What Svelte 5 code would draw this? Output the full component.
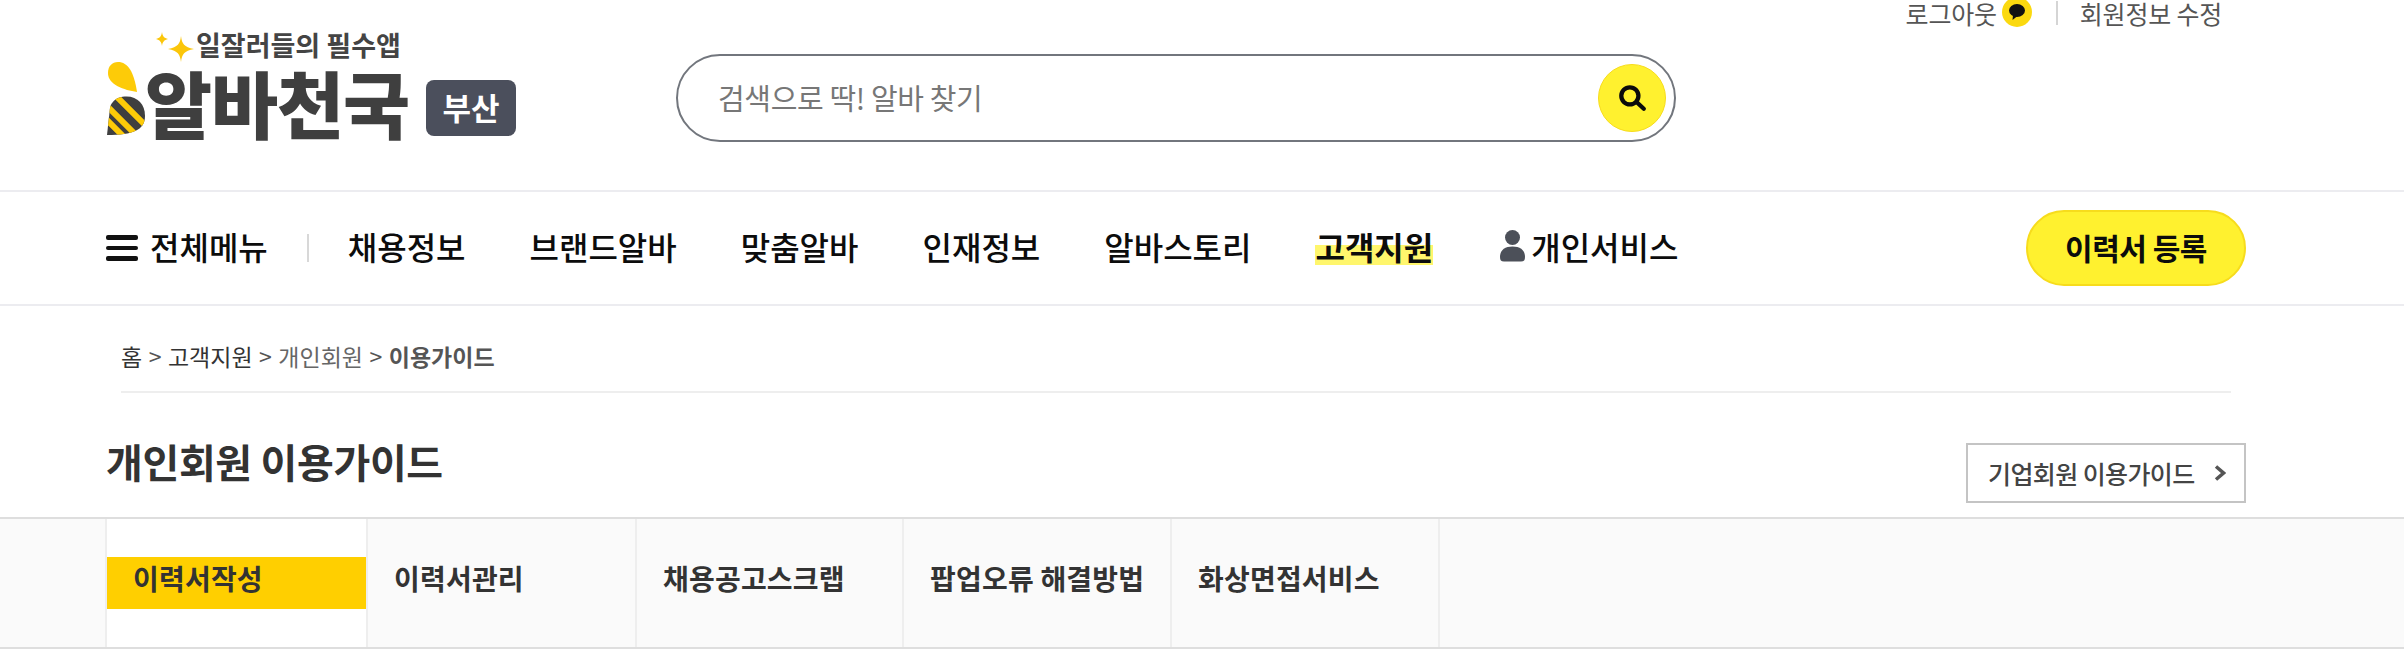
<script>
  const navItems = [
    { label: '채용정보' },
    { label: '브랜드알바' },
    { label: '맞춤알바' },
    { label: '인재정보' },
    { label: '알바스토리' },
    { label: '고객지원', active: true }
  ];
  const tabs = [
    { label: '이력서작성', width: 263, active: true },
    { label: '이력서관리', width: 269 },
    { label: '채용공고스크랩', width: 267 },
    { label: '팝업오류 해결방법', width: 268 },
    { label: '화상면접서비스', width: 268 }
  ];
</script>

<div class="page">
  <header class="header">
    <div class="util">
      <span class="login">로그아웃</span>
      <svg class="kakao" width="30" height="30" viewBox="0 0 30 30" aria-hidden="true">
        <circle cx="15" cy="15" r="15" fill="#fbd90f" />
        <ellipse cx="15" cy="13.5" rx="8" ry="6.5" fill="#111" />
        <path d="M11 18 L10.5 23 L15.5 19 Z" fill="#111" />
      </svg>
      <i class="util-sep"></i>
      <span class="login">회원정보 수정</span>
    </div>
    <div class="brand-row">
      <div class="logo">
        <div class="tagline">
          <svg width="40" height="40" viewBox="0 0 40 40" aria-hidden="true">
            <path d="M8 6 C8.6 10 10 12 14 13 C10 14 8.6 16 8 20 C7.400 16 6 14 2 13 C6 12 7.400 10 8 6 Z" fill="#fbc60a" />
            <path d="M27 10 C28 18 30 21 40 23 C30 25 28 28 27 36 C26 28 24 25 14 23 C24 21 26 18 27 10 Z" fill="#fbc60a" />
          </svg>
          <span>일잘러들의 필수앱</span>
        </div>
        <div class="wordmark">
          <svg class="bee" width="42" height="76" viewBox="0 0 42 76" aria-hidden="true">
            <path d="M12 0 C22 0 28 10 31 30 C18 28 2 23 2 11 C2 4 6 0 12 0 Z" fill="#fdcb08" />
            <clipPath id="bee-body"><path d="M12 36 C28 31 39 40 39 54 C39 68 27 73 1 73 L4 46 C5 41 8 38 12 36 Z" /></clipPath>
            <g clip-path="url(#bee-body)">
              <rect width="42" height="76" fill="#3f3f3f" />
              <path d="M-5 38 L30 73 M-5 52 L18 75 M4 28 L38 62" stroke="#fdcb08" stroke-width="6" fill="none" />
            </g>
          </svg>
          <span class="word">알바천국</span>
          <span class="badge">부산</span>
        </div>
      </div>
      <form class="search" onsubmit={(e) => e.preventDefault()}>
        <span class="placeholder">검색으로 딱! 알바 찾기</span>
        <button class="search-btn" type="submit" aria-label="검색">
          <svg width="30" height="30" viewBox="0 0 28 28" aria-hidden="true">
            <circle cx="12" cy="12" r="8" fill="none" stroke="#0b0b0b" stroke-width="4" />
            <path d="M18.500 18 L25 24" stroke="#0b0b0b" stroke-width="4" stroke-linecap="round" />
          </svg>
        </button>
      </form>
    </div>
  </header>

  <nav class="nav">
    <div class="nav-main">
      <div class="menu-all">
        <span class="burger"><i></i><i></i><i></i></span>
        <span>전체메뉴</span>
      </div>
      <i class="nav-sep"></i>
      <ul class="nav-list">
        {#each navItems as item}
          <li><a href="#top" class:current={item.active}>{item.label}</a></li>
        {/each}
        <li class="person">
          <svg width="25" height="32" viewBox="0 0 25 32" aria-hidden="true">
            <circle cx="12.500" cy="7.500" r="7.500" fill="#4c5059" />
            <path d="M0 27 C0 20 5 16.500 12.500 16.500 C20 16.500 25 20 25 27 C25 30 24 31.500 21 31.500 L4 31.500 C1 31.500 0 30 0 27 Z" fill="#4c5059" />
          </svg>
          <a href="#top">개인서비스</a>
        </li>
      </ul>
    </div>
    <button class="resume" type="button">이력서 등록</button>
  </nav>

  <div class="crumbs">
    <span class="c-home">홈</span><span class="gt">&gt;</span><span class="c-home">고객지원</span><span class="gt">&gt;</span><span class="c-mid">개인회원</span><span class="gt">&gt;</span><strong>이용가이드</strong>
  </div>

  <div class="title-row">
    <h1>개인회원 이용가이드</h1>
    <a class="biz" href="#top">
      <span>기업회원 이용가이드</span>
      <svg width="12" height="18" viewBox="0 0 12 18" aria-hidden="true">
        <path d="M2 2.500 L9.500 9 L2 15.500" fill="none" stroke="#555" stroke-width="3.500" />
      </svg>
    </a>
  </div>

  <div class="tabs">
    {#each tabs as tab}
      <div class="tab" class:on={tab.active} style="width:{tab.width}px">
        <span class="tab-label">{tab.label}</span>
      </div>
    {/each}
  </div>
</div>

<style>
  :global(body) {
    margin: 0;
    background: #fff;
  }
  .page {
    width: 2404px;
    height: 662px;
    overflow: hidden;
    font-family: "Noto Sans CJK KR", "Noto Sans", sans-serif;
    color: #111;
  }
  .header {
    height: 190px;
    display: flex;
    flex-direction: column;
  }
  .util {
    height: 26px;
    display: flex;
    align-items: center;
    justify-content: flex-end;
    padding-right: 182px;
    font-size: 25px;
    color: #555;
    letter-spacing: -0.2px;
  }
  .login {
    line-height: 26px;
  }
  .kakao {
    margin-left: 5px;
    margin-top: -2px;
  }
  .util-sep {
    width: 2px;
    height: 24px;
    background: #d5d5d5;
    margin: 0 22px 0 24px;
  }
  .brand-row {
    display: flex;
    padding-left: 106px;
  }
  .logo {
    width: 570px;
  }
  .tagline {
    display: flex;
    align-items: center;
    height: 40px;
    padding-left: 48px;
    font-size: 27px;
    line-height: 30px;
    font-weight: 700;
    color: #444;
  }
  .tagline span {
    margin-top: -2px;
  }
  .tagline svg {
    margin-right: 2px;
  }
  .wordmark {
    display: flex;
    align-items: center;
    height: 76px;
    margin-top: -4px;
  }
  .bee {
    flex: none;
  }
  .word {
    font-size: 73px;
    line-height: 76px;
    font-weight: 900;
    color: #3f3f3f;
    letter-spacing: -1.2px;
    margin: 2px 0 0 -3px;
    width: 281px;
  }
  .badge {
    width: 90px;
    height: 56px;
    margin-top: 16px;
    padding-bottom: 2px;
    box-sizing: border-box;
    border-radius: 8px;
    background: #4b4f5c;
    color: #fff;
    font-size: 31px;
    line-height: 50px;
    font-weight: 700;
    display: flex;
    align-items: center;
    justify-content: center;
  }
  .search {
    width: 1000px;
    height: 88px;
    margin-top: 28px;
    box-sizing: border-box;
    border: 2px solid #72767d;
    border-radius: 44px;
    display: flex;
    align-items: center;
    justify-content: space-between;
    padding: 0 8px 0 40px;
  }
  .placeholder {
    font-size: 29px;
    color: #777;
    letter-spacing: -0.35px;
    margin-top: -3px;
  }
  .search-btn {
    width: 68px;
    height: 68px;
    border-radius: 50%;
    border: 1px solid #f7dc1c;
    background: #fff12f;
    padding: 0;
    display: flex;
    align-items: center;
    justify-content: center;
  }
  .nav {
    height: 112px;
    border-top: 2px solid #ececf0;
    border-bottom: 2px solid #ececf0;
    display: flex;
    align-items: center;
    padding: 0 158px 0 106px;
    font-size: 32px;
    font-weight: 500;
    color: #0c0c0c;
  }
  .nav-main {
    display: flex;
    align-items: center;
    flex: 1;
    margin-top: -4px;
  }
  .menu-all {
    display: flex;
    align-items: center;
    gap: 12px;
  }
  .burger {
    width: 32px;
    display: flex;
    flex-direction: column;
    gap: 6px;
    margin-top: 4px;
  }
  .burger i {
    display: block;
    height: 4.500px;
    background: #111;
    border-radius: 2px;
  }
  .nav-sep {
    width: 2px;
    height: 28px;
    background: #d8d8d8;
    margin: 4px 39px 0 39px;
  }
  .nav-list {
    display: flex;
    align-items: center;
    gap: 64px;
    list-style: none;
    margin: 0;
    padding: 0;
  }
  .nav-list a {
    color: inherit;
    text-decoration: none;
  }
  .nav-list a.current {
    font-weight: 700;
    background: linear-gradient(to bottom, transparent 48%, #fff66c 48%, #fff66c 92%, transparent 92%);
    display: inline-block;
    line-height: 46px;
  }
  .person {
    display: flex;
    align-items: center;
    gap: 6px;
    margin-left: 3px;
  }
  .resume {
    width: 220px;
    height: 76px;
    border-radius: 38px;
    border: 2px solid #f7dc1c;
    background: #fff12f;
    color: #0c0c0c;
    font-family: inherit;
    font-size: 30px;
    font-weight: 700;
    letter-spacing: -0.5px;
    padding: 0 0 3px;
  }
  .crumbs {
    margin: 0 0 0 121px;
    width: 2110px;
    height: 87px;
    box-sizing: border-box;
    border-bottom: 2px solid #eee;
    display: flex;
    align-items: center;
    font-size: 23px;
    color: #333;
    padding-top: 15px;
  }
  .gt {
    margin: 0 6.500px;
    color: #555;
  }
  .c-mid {
    color: #666;
  }
  .crumbs strong {
    color: #555;
    font-weight: 700;
  }
  .title-row {
    height: 124px;
    box-sizing: border-box;
    display: flex;
    align-items: flex-start;
    justify-content: space-between;
    padding: 50px 158px 0 106px;
  }
  h1 {
    margin: -4px 0 0;
    font-size: 40px;
    line-height: 44px;
    font-weight: 700;
    color: #333;
    letter-spacing: -0.35px;
  }
  .biz {
    width: 280px;
    height: 60px;
    box-sizing: border-box;
    border: 2px solid #c4c4c4;
    display: flex;
    align-items: center;
    justify-content: space-between;
    padding: 0 18px 0 20px;
    font-size: 25px;
    font-weight: 500;
    color: #444;
    text-decoration: none;
    letter-spacing: -0.6px;
  }
  .tabs {
    height: 132px;
    box-sizing: border-box;
    border-top: 2px solid #dedede;
    border-bottom: 2px solid #dedede;
    background: #fafafa;
    display: flex;
    padding-left: 105px;
  }
  .tab {
    box-sizing: border-box;
    border-right: 2px solid #eee;
    display: flex;
    align-items: center;
    height: 128px;
    font-size: 28px;
    font-weight: 700;
    color: #333;
    letter-spacing: 0.2px;
  }
  .tab:first-child {
    border-left: 2px solid #eee;
  }
  .tab-label {
    display: block;
    width: 100%;
    height: 52px;
    line-height: 43px;
    padding-left: 26px;
    box-sizing: border-box;
    white-space: nowrap;
  }
  .tab.on {
    background: #fff;
  }
  .tab.on .tab-label {
    background: #ffcf00;
  }
</style>
